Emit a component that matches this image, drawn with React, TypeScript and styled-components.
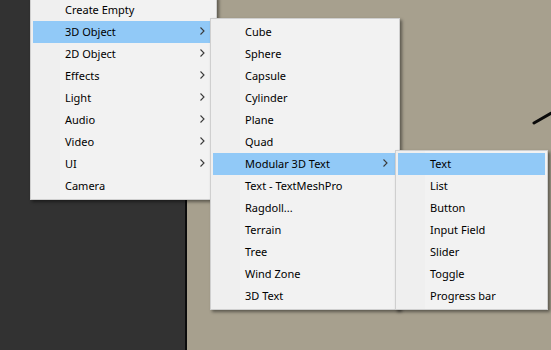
import React from "react";
import styled, { createGlobalStyle } from "styled-components";

const Global = createGlobalStyle`
  html, body { margin: 0; padding: 0; overflow: hidden; }
  #root { width: 551px; height: 350px; }
`;

const Screen = styled.div`
  position: relative;
  display: flex;
  width: 551px;
  height: 350px;
  overflow: hidden;
  font-family: "Noto Sans", "Segoe UI", sans-serif;
  font-size: 11px;
`;

const DarkPanel = styled.div`
  width: 185px;
  background: #323232;
`;

const Divider = styled.div`
  width: 2px;
  background: #0c0c0c;
`;

const Scene = styled.div`
  flex: 1;
  background: #a7a08e;
`;

const Stroke = styled.svg`
  position: absolute;
  left: 520px;
  top: 100px;
`;

const Menu = styled.div<{ $left: number; $top: number; $width: number }>`
  position: absolute;
  left: ${(p) => p.$left}px;
  top: ${(p) => p.$top}px;
  width: ${(p) => p.$width}px;
  box-sizing: border-box;
  padding: 2px;
  border: 1px solid #cfcfcf;
  background: linear-gradient(to right, #efefef 0 29px, #f2f2f2 29px);
  box-shadow: 2px 2px 3px rgba(0, 0, 0, 0.45);
  display: flex;
  flex-direction: column;
`;

const Item = styled.div<{ $active?: boolean }>`
  height: 22px;
  box-sizing: border-box;
  display: flex;
  align-items: center;
  padding: 0 9px 2px 32px;
  color: #000;
  background: ${(p) => (p.$active ? "#91c9f7" : "transparent")};
  white-space: nowrap;
`;

const Label = styled.span`
  flex: 1;
`;

const Chevron = () => (
  <svg width="5" height="8" viewBox="0 0 5 8">
    <polyline points="0.5,0.5 4,4 0.5,7.5" fill="none" stroke="#3a3a3a" strokeWidth="1.1" />
  </svg>
);

type Entry = { label: string; sub?: boolean; active?: boolean };

const menu1: Entry[] = [
  { label: "Create Empty" },
  { label: "3D Object", sub: true, active: true },
  { label: "2D Object", sub: true },
  { label: "Effects", sub: true },
  { label: "Light", sub: true },
  { label: "Audio", sub: true },
  { label: "Video", sub: true },
  { label: "UI", sub: true },
  { label: "Camera" },
];

const menu2: Entry[] = [
  { label: "Cube" },
  { label: "Sphere" },
  { label: "Capsule" },
  { label: "Cylinder" },
  { label: "Plane" },
  { label: "Quad" },
  { label: "Modular 3D Text", sub: true, active: true },
  { label: "Text - TextMeshPro" },
  { label: "Ragdoll..." },
  { label: "Terrain" },
  { label: "Tree" },
  { label: "Wind Zone" },
  { label: "3D Text" },
];

const menu3: Entry[] = [
  { label: "Text", active: true },
  { label: "List" },
  { label: "Button" },
  { label: "Input Field" },
  { label: "Slider" },
  { label: "Toggle" },
  { label: "Progress bar" },
];

const MenuList = ({ items, left, top, width }: { items: Entry[]; left: number; top: number; width: number }) => (
  <Menu $left={left} $top={top} $width={width}>
    {items.map((e) => (
      <Item key={e.label} $active={e.active}>
        <Label>{e.label}</Label>
        {e.sub && <Chevron />}
      </Item>
    ))}
  </Menu>
);

export default function App() {
  return (
    <>
      <Global />
      <Screen>
        <DarkPanel />
        <Divider />
        <Scene />
        <Stroke width="40" height="30" viewBox="0 0 40 30">
          <line x1="14" y1="23" x2="40" y2="8" stroke="#0a0a0a" strokeWidth="3" strokeLinecap="round" />
        </Stroke>
        <MenuList items={menu1} left={30} top={-4} width={187} />
        <MenuList items={menu2} left={210} top={18} width={190} />
        <MenuList items={menu3} left={395} top={150} width={153} />
      </Screen>
    </>
  );
}
